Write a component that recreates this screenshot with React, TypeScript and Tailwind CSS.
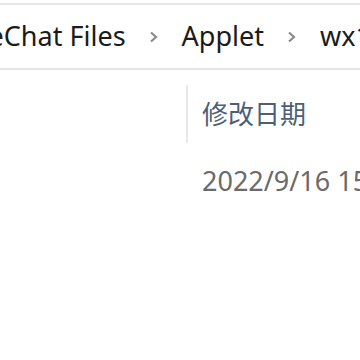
import React from 'react';

const Chevron = () => (
    <svg width="12" height="12" viewBox="0 0 12 12" className="shrink-0">
        <polyline points="3,1.5 8,6 3,10.5" fill="none" stroke="#8a8a8a" strokeWidth="2.2" />
    </svg>
);

export default function App() {
    const crumbs = ['WeChat Files', 'Applet', 'wx1a2b3c4d5e6f'];

    return (
        <div className="w-[360px] h-[360px] overflow-hidden bg-white font-['Noto_Sans','Noto_Sans_CJK_SC',sans-serif]">
            <div className="mt-[3px] h-[67px] border-y-2 border-[#e6e6e6] flex items-center whitespace-nowrap text-[27px] text-[#1b1b1b]">
                <div className="flex items-center gap-[22px] -ml-[36px]">
                    {crumbs.map((c, i) => (
                        <React.Fragment key={c}>
                            {i > 0 && <Chevron />}
                            <span>{c}</span>
                        </React.Fragment>
                    ))}
                </div>
            </div>

            <div className="flex mt-[15px]">
                <div className="w-[186px] shrink-0" />
                <div className="flex flex-col">
                    <div className="h-[58px] border-l-2 border-[#e8e8e8] pl-[14px] flex items-center text-[26px] text-[#4c5f78] whitespace-nowrap">
                        修改日期
                    </div>
                    <div className="pl-[16px] mt-[18px] text-[27px] text-[#6b6b6b] whitespace-nowrap">
                        2022/9/16 15:32
                    </div>
                </div>
            </div>
        </div>
    );
}
